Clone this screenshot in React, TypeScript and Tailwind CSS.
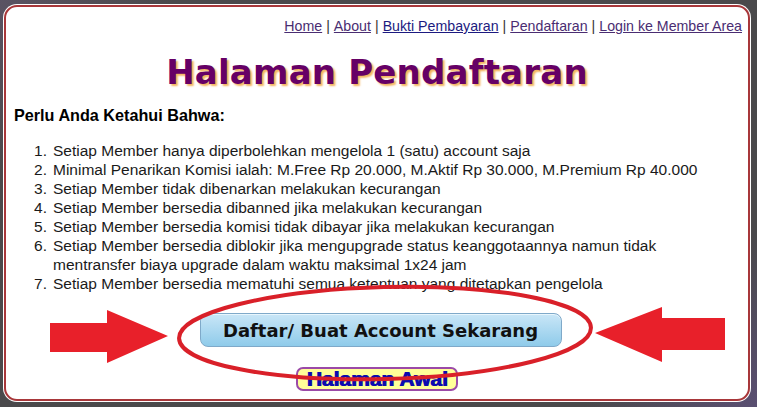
import React from "react";

const items = [
  "Setiap Member hanya diperbolehkan mengelola 1 (satu) account saja",
  "Minimal Penarikan Komisi ialah: M.Free Rp 20.000, M.Aktif Rp 30.000, M.Premium Rp 40.000",
  "Setiap Member tidak dibenarkan melakukan kecurangan",
  "Setiap Member bersedia dibanned jika melakukan kecurangan",
  "Setiap Member bersedia komisi tidak dibayar jika melakukan kecurangan",
  "Setiap Member bersedia diblokir jika mengupgrade status keanggotaannya namun tidak mentransfer biaya upgrade dalam waktu maksimal 1x24 jam",
  "Setiap Member bersedia mematuhi semua ketentuan yang ditetapkan pengelola",
];

export default function App() {
  return (
    <div className="relative w-[757px] h-[407px] overflow-hidden bg-[linear-gradient(135deg,#5a5363_0%,#4a494b_15%,#4a494b_85%,#5a4f72_100%)] pt-[4px] pl-[3px]">
      <div className="w-[748px] h-[398px] rounded-[14px] bg-white p-[1px]">
        <div className="h-full rounded-[13px] border-2 border-[#a8373a] bg-white flex flex-col font-['Liberation_Sans',Arial,sans-serif]">
          <div className="flex justify-end pr-[6px] pt-[11px] text-[14.2px] leading-[16px] text-[#333]">
            <a className="underline text-[#4a2d72]">Home</a>
            <span className="px-[4px]">|</span>
            <a className="underline text-[#4a2d72]">About</a>
            <span className="px-[4px]">|</span>
            <a className="underline text-[#1c1a80]">Bukti Pembayaran</a>
            <span className="px-[4px]">|</span>
            <a className="underline text-[#4a2d72]">Pendaftaran</a>
            <span className="px-[4px]">|</span>
            <a className="underline text-[#4a2d72]">Login ke Member Area</a>
          </div>
          <h1 className="mt-[18px] text-center font-['DejaVu_Sans',Verdana,sans-serif] font-bold text-[34px] leading-[40px] text-[#660066] [text-shadow:2px_2px_2px_#f3b45c] tracking-[0.2px]">
            Halaman Pendaftaran
          </h1>
          <div className="mt-[14px] pl-[8px] font-bold text-[16.2px] leading-[18px] text-black">
            Perlu Anda Ketahui Bahwa:
          </div>
          <ol className="mt-[17px] pl-[24px] text-[15.5px] leading-[19px] text-[#1a1a1a]">
            {items.map((t, i) => (
              <li key={i} className="flex">
                <span className="w-[23px] shrink-0 text-right pr-[6px]">{i + 1}.</span>
                <span className="w-[657px]">{t}</span>
              </li>
            ))}
          </ol>
          <div className="mt-[20px] flex justify-center pl-[7px]">
            <button className="h-[34px] w-[362px] rounded-[8px] border border-[#7fa9c9] bg-[linear-gradient(#c9e6f7,#8fcbea)] font-['DejaVu_Sans',Verdana,sans-serif] font-bold text-[18px] text-[#111] shadow-[inset_0_1px_0_#e8f6fd]">
              Daftar/ Buat Account Sekarang
            </button>
          </div>
          <div className="mt-[20px] flex justify-center">
            <a className="h-[24px] px-[8px] rounded-[7px] border-2 border-[#9b4aa8] bg-[#ffff99] font-['Liberation_Sans',Arial,sans-serif] font-bold text-[21px] leading-[20px] text-[#0b0bb0] [text-shadow:1px_0_0_#0b0bb0]">
              Halaman Awal
            </a>
          </div>
        </div>
      </div>
      <svg className="absolute inset-0 pointer-events-none" width="757" height="407" viewBox="0 0 757 407">
        <ellipse cx="385" cy="333" rx="206" ry="46" fill="none" stroke="#d92029" strokeWidth="4" transform="rotate(-1.5 385 333)" />
        <polygon points="50,323 107,323 107,310 168,336 107,363 107,352 50,352" fill="#e8202a" />
        <polygon points="725,318 662,318 662,307 595,333 662,362 662,350 725,350" fill="#e8202a" />
      </svg>
    </div>
  );
}
